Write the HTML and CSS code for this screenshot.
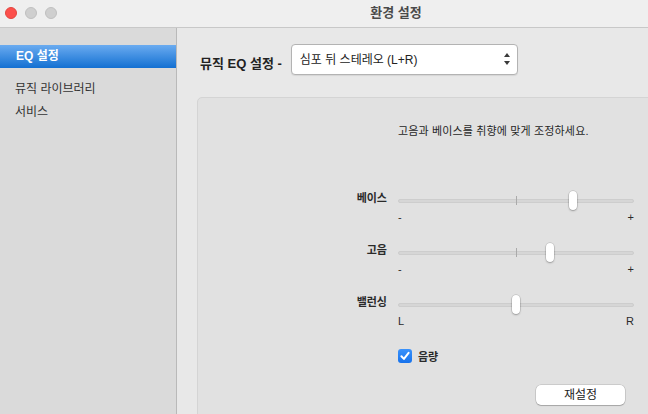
FILE: index.html
```html
<!DOCTYPE html>
<html lang="ko">
<head>
<meta charset="utf-8">
<title>환경 설정</title>
<link rel="stylesheet" href="styles.css">
</head>
<body>
<div class="window">
  <header class="titlebar">
    <div class="lights">
      <span class="light red"></span>
      <span class="light"></span>
      <span class="light"></span>
    </div>
    <div class="title">환경 설정</div>
  </header>
  <div class="main">
    <nav class="sidebar">
      <div class="nav-item selected">EQ 설정</div>
      <div class="nav-group">
        <div class="nav-item">뮤직 라이브러리</div>
        <div class="nav-item">서비스</div>
      </div>
    </nav>
    <section class="content">
      <div class="eq-header">
        <span class="eq-label">뮤직 EQ 설정 -</span>
        <div class="select">
          <span class="select-text">심포 뒤 스테레오 (L+R)</span>
          <svg class="select-arrows" width="6" height="12" viewBox="0 0 6 12">
            <polygon points="3,0 6,4 0,4" fill="#3a3a3a"/>
            <polygon points="0,8 6,8 3,12" fill="#3a3a3a"/>
          </svg>
        </div>
      </div>
      <div class="group">
        <div class="row desc-row">
          <span></span>
          <p class="desc">고음과 베이스를 취향에 맞게 조정하세요.</p>
        </div>

        <div class="row slider-row first">
          <span class="slider-label">베이스</span>
          <div class="track ticked"><span class="thumb" style="left: 74.2%"></span></div>
        </div>
        <div class="row marks-row">
          <span></span>
          <div class="marks"><span>-</span><span>+</span></div>
        </div>

        <div class="row slider-row">
          <span class="slider-label">고음</span>
          <div class="track ticked"><span class="thumb" style="left: 64.4%"></span></div>
        </div>
        <div class="row marks-row">
          <span></span>
          <div class="marks"><span>-</span><span>+</span></div>
        </div>

        <div class="row slider-row">
          <span class="slider-label">밸런싱</span>
          <div class="track"><span class="thumb" style="left: 50%"></span></div>
        </div>
        <div class="row marks-row">
          <span></span>
          <div class="marks letters"><span>L</span><span>R</span></div>
        </div>

        <div class="row check-row">
          <span></span>
          <label class="check">
            <span class="checkbox">
              <svg width="14" height="14" viewBox="0 0 14 14"><path d="M3.4 7.2 L5.9 9.9 L10.6 3.9" fill="none" stroke="#fff" stroke-width="2" stroke-linecap="round" stroke-linejoin="round"/></svg>
            </span>
            <span class="check-text">음량</span>
          </label>
        </div>

        <div class="row button-row">
          <span></span>
          <div class="btn-wrap"><button class="btn">재설정</button></div>
        </div>
      </div>
    </section>
  </div>
</div>
</body>
</html>
```

FILE: styles.css
```css
* { box-sizing: border-box; }

html, body {
  margin: 0;
  padding: 0;
}

body {
  width: 648px;
  height: 414px;
  overflow: hidden;
  font-family: "Liberation Sans", "Noto Sans CJK KR", sans-serif;
  color: #2b2b2b;
}

.window {
  width: 648px;
  height: 414px;
  display: flex;
  flex-direction: column;
  overflow: hidden;
}

/* Title bar */
.titlebar {
  flex: none;
  height: 28px;
  background: #efefef;
  border-bottom: 1px solid #c8c8c8;
  display: flex;
  align-items: flex-start;
}

.lights {
  display: flex;
  gap: 8px;
  padding: 7px 0 0 5px;
}

.light {
  width: 12px;
  height: 12px;
  border-radius: 50%;
  background: #cfcfcf;
  border: 1px solid #c0c0c0;
}

.light.red {
  background: #fc4f4b;
  border-color: #e2463f;
}

.title {
  width: 200px;
  margin-left: 239px;
  text-align: center;
  font-size: 13px;
  font-weight: 700;
  color: #4a4a4a;
  line-height: 26px;
}

/* Main */
.main {
  flex: 1;
  display: flex;
  min-height: 0;
}

.sidebar {
  flex: none;
  width: 177px;
  background: #dadada;
  border-right: 1px solid #b9b9b9;
  padding-top: 17px;
}

.nav-item {
  height: 23px;
  line-height: 23px;
  padding-left: 15px;
  font-size: 12px;
  color: #333;
}

.nav-item.selected {
  background: linear-gradient(#6aabf0, #1370d2);
  color: #fff;
  font-weight: 700;
  padding-left: 16px;
}

.nav-group {
  margin-top: 10px;
}

.content {
  flex: 1;
  background: #e8e8e8;
  padding: 16px 0 0 20px;
  min-width: 0;
}

.eq-header {
  display: flex;
  align-items: flex-start;
  gap: 8px;
  height: 53px;
}

.eq-label {
  font-size: 13px;
  font-weight: 700;
  color: #222;
  margin: 12px 0 0 3px;
  line-height: 16px;
}

.select {
  width: 227px;
  height: 31px;
  background: #fff;
  border: 1px solid #b3b3b3;
  border-radius: 4px;
  box-shadow: 0 1px 1px rgba(0,0,0,0.08);
  display: flex;
  align-items: center;
  justify-content: space-between;
  padding: 0 7px 0 8px;
  margin-left: 1px;
}

.select-text {
  font-size: 12px;
  color: #222;
  margin-top: -3px;
}

.select-arrows {
  display: block;
  margin-top: -1px;
}

/* Group box */
.group {
  width: 480px;
  height: 330px;
  background: #e1e1e1;
  border: 1px solid #d4d4d4;
  border-radius: 5px;
}

.row {
  display: grid;
  grid-template-columns: 189px 236px;
  column-gap: 11px;
  align-items: center;
}

.desc-row {
  margin-top: 25px;
}

.desc {
  margin: 0;
  font-size: 11px;
  line-height: 16px;
  color: #262626;
  white-space: nowrap;
  letter-spacing: 0.15px;
}

.slider-row {
  height: 20px;
  margin-top: 20px;
}

.slider-row.first {
  margin-top: 52px;
}

.slider-label {
  text-align: right;
  font-size: 11px;
  font-weight: 700;
  color: #2a2a2a;
  margin-top: -9px;
}

.track {
  position: relative;
  height: 4px;
  background: #d6d6d6;
  border: 1px solid #cdcdcd;
  border-radius: 2px;
}

.track.ticked::before {
  content: "";
  position: absolute;
  left: 117px;
  top: -4px;
  width: 1px;
  height: 9px;
  background: #aaaaaa;
}

.thumb {
  position: absolute;
  top: 50%;
  width: 8px;
  height: 19px;
  margin-left: -4px;
  margin-top: -10px;
  background: #fff;
  border-radius: 4px;
  box-shadow: 0 0 0 0.5px rgba(0,0,0,0.18), 0 1px 2px rgba(0,0,0,0.25);
}

.marks-row {
  height: 12px;
  margin-top: 0;
}

.marks {
  display: flex;
  justify-content: space-between;
  font-size: 11px;
  line-height: 12px;
  color: #2a2a2a;
}

.marks.letters {
  font-size: 11px;
}

.check-row {
  margin-top: 21px;
  height: 16px;
}

.check {
  display: flex;
  align-items: center;
  gap: 6px;
}

.checkbox {
  width: 14px;
  height: 14px;
  border-radius: 3px;
  background: linear-gradient(#3a92fb, #1672ec);
  display: block;
}

.checkbox svg {
  display: block;
}

.check-text {
  font-size: 11px;
  font-weight: 700;
  color: #2a2a2a;
}

.button-row {
  margin-top: 21px;
}

.btn-wrap {
  padding-left: 138px;
}

.btn {
  width: 89px;
  height: 20px;
  background: #fff;
  border: none;
  border-radius: 5px;
  box-shadow: 0 0 0 0.5px rgba(0,0,0,0.2), 0 1px 1px rgba(0,0,0,0.18);
  font-family: inherit;
  font-size: 12px;
  color: #222;
  padding: 0;
  line-height: 20px;
}
```
